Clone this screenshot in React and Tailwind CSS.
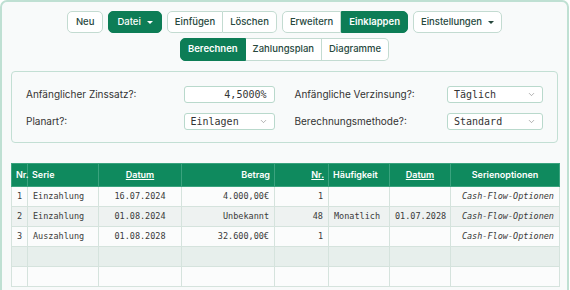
import React from "react";
import { ChevronDown } from "lucide-react";

const btnBase = "h-[22px] px-[7px] text-[9.5px] font-medium flex items-center border";
const white = "bg-white border-[#c3dbd1] text-[#27483d]";
const green = "bg-[#0d7d56] border-[#0d7d56] text-white";

function Caret() {
  return <span className="ml-[6px] inline-block w-0 h-0 border-l-[3px] border-r-[3px] border-t-[3px] border-l-transparent border-r-transparent border-t-current" />;
}

function Sel({ value, w }) {
  return (
    <div className={`${w} h-[17px] bg-white border border-[#b9d9cc] rounded-[3px] flex items-center justify-between pl-[6px] pr-[6px]`}>
      <span className="font-['DejaVu_Sans_Mono',monospace] text-[10px] text-[#333]">{value}</span>
      <ChevronDown size={9} strokeWidth={1.5} className="text-[#777]" />
    </div>
  );
}

const rows = [
  { nr: "1", serie: "Einzahlung", datum: "16.07.2024", betrag: "4.000,00€", n: "1", h: "", d2: "", o: "Cash-Flow-Optionen" },
  { nr: "2", serie: "Einzahlung", datum: "01.08.2024", betrag: "Unbekannt", n: "48", h: "Monatlich", d2: "01.07.2028", o: "Cash-Flow-Optionen" },
  { nr: "3", serie: "Auszahlung", datum: "01.08.2028", betrag: "32.600,00€", n: "1", h: "", d2: "", o: "Cash-Flow-Optionen" },
  null,
  null,
];

export default function App() {
  const td = "border border-[#d5e3dd] h-[20px] px-[5px] font-['DejaVu_Sans_Mono',monospace] text-[8.5px] text-[#3a3a3a] whitespace-nowrap";
  const th = "border border-[#3aa37e] h-[23px] px-[4px] text-[9px] font-semibold text-white whitespace-nowrap";
  return (
    <div className="w-[570px] h-[290px] overflow-hidden bg-white font-['Inter',sans-serif]">
      <div className="w-[569px] h-[310px] border-2 border-[#bfe0d3] rounded-[7px] bg-[#f8fafa] px-[9px] pt-[9px]">
        <div className="flex justify-center gap-[5px]">
          <button className={`${btnBase} ${white} rounded-[5px] px-[8px]`}>Neu</button>
          <button className={`${btnBase} ${green} rounded-[5px] px-[8px]`}>Datei<Caret /></button>
          <div className="flex">
            <button className={`${btnBase} ${white} rounded-l-[5px]`}>Einfügen</button>
            <button className={`${btnBase} ${white} rounded-r-[5px] border-l-0`}>Löschen</button>
          </div>
          <div className="flex">
            <button className={`${btnBase} ${white} rounded-l-[5px]`}>Erweitern</button>
            <button className={`${btnBase} ${green} rounded-r-[5px] font-semibold`}>Einklappen</button>
          </div>
          <button className={`${btnBase} ${white} rounded-[5px]`}>Einstellungen<Caret /></button>
        </div>
        <div className="flex justify-center mt-[5px]">
          <button className={`${btnBase} ${green} h-[23px] rounded-l-[5px] font-semibold`}>Berechnen</button>
          <button className={`${btnBase} ${white} h-[23px] border-l-0`}>Zahlungsplan</button>
          <button className={`${btnBase} ${white} h-[23px] rounded-r-[5px] border-l-0`}>Diagramme</button>
        </div>

        <div className="mt-[10px] h-[72px] border border-[#c3dfd4] rounded-[4px] bg-[#f8fafa] px-[14px] pt-[14px] grid grid-cols-2 content-start gap-x-[20px] gap-y-[10px] text-[10px] text-[#333]">
          <div className="flex items-center justify-between">
            <span>Anfänglicher Zinssatz?:</span>
            <div className="w-[91px] h-[17px] bg-white border border-[#b9d9cc] rounded-[3px] flex items-center justify-end pr-[7px] font-['DejaVu_Sans_Mono',monospace] text-[10px]">4,5000%</div>
          </div>
          <div className="flex items-center justify-between">
            <span>Anfängliche Verzinsung?:</span>
            <Sel value="Täglich" w="w-[96px]" />
          </div>
          <div className="flex items-center justify-between">
            <span>Planart?:</span>
            <Sel value="Einlagen" w="w-[91px]" />
          </div>
          <div className="flex items-center justify-between">
            <span>Berechnungsmethode?:</span>
            <Sel value="Standard" w="w-[96px]" />
          </div>
        </div>

        <table className="mt-[20px] w-[548px] table-fixed border-collapse border border-[#b9dccd]">
          <colgroup>
            <col className="w-[16px]" />
            <col className="w-[71px]" />
            <col className="w-[83px]" />
            <col className="w-[93px]" />
            <col className="w-[54px]" />
            <col className="w-[61px]" />
            <col className="w-[61px]" />
            <col className="w-[109px]" />
          </colgroup>
          <thead className="bg-[#0f8a5e]">
            <tr>
              <th className={`${th} text-left px-[2px]`}>Nr.</th>
              <th className={`${th} text-left`}>Serie</th>
              <th className={`${th} text-center underline`}>Datum</th>
              <th className={`${th} text-right`}>Betrag</th>
              <th className={`${th} text-right underline`}>Nr.</th>
              <th className={`${th} text-left`}>Häufigkeit</th>
              <th className={`${th} text-center underline`}>Datum</th>
              <th className={`${th} text-center`}>Serienoptionen</th>
            </tr>
          </thead>
          <tbody>
            {rows.map((r, i) => {
              const bg = i === 1 ? "bg-[#eef2f1]" : i === 3 ? "bg-[#e7efec]" : "bg-[#fbfcfc]";
              return (
                <tr key={i} className={bg}>
                  <td className={`${td} text-center px-[2px]`}>{r ? r.nr : ""}</td>
                  <td className={`${td} text-left`}>{r ? r.serie : ""}</td>
                  <td className={`${td} text-center`}>{r ? r.datum : ""}</td>
                  <td className={`${td} text-right`}>{r ? r.betrag : ""}</td>
                  <td className={`${td} text-right`}>{r ? r.n : ""}</td>
                  <td className={`${td} text-left px-[2px]`}>{r ? r.h : ""}</td>
                  <td className={`${td} text-center`}>{r ? r.d2 : ""}</td>
                  <td className={`${td} text-right italic`}>{r ? r.o : ""}</td>
                </tr>
              );
            })}
          </tbody>
        </table>
      </div>
    </div>
  );
}
